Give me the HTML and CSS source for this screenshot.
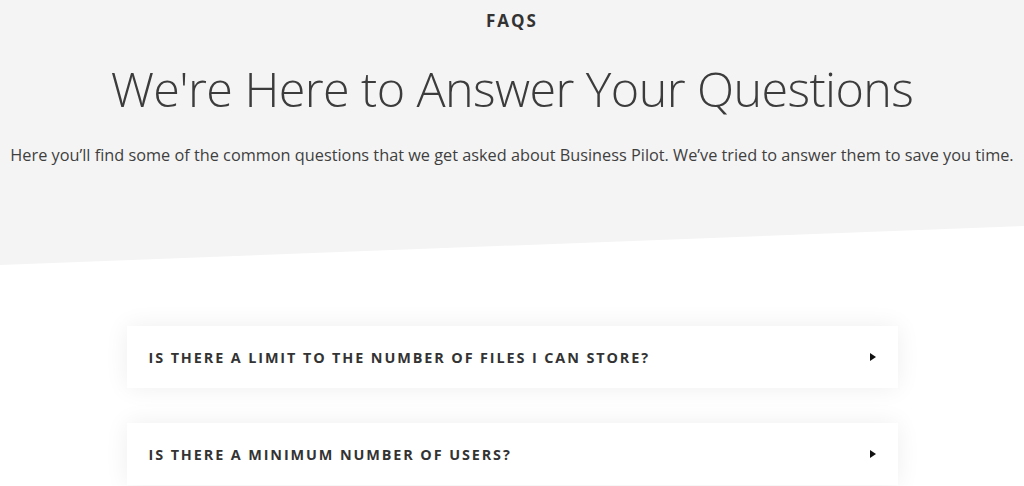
FILE: index.html
```html
<!DOCTYPE html>
<html>
<head>
<meta charset="utf-8">
<link rel="stylesheet" href="styles.css">
</head>
<body>
<section class="hero">
  <div class="eyebrow">FAQS</div>
  <h1 class="title">We're Here to Answer Your Questions</h1>
  <p class="lead">Here you’ll find some of the common questions that we get asked about Business Pilot. We’ve tried to answer them to save you time.</p>
</section>
<section class="faqs">
  <div class="faq">
    <span class="q">IS THERE A LIMIT TO THE NUMBER OF FILES I CAN STORE?</span>
    <span class="arrow"></span>
  </div>
  <div class="faq">
    <span class="q">IS THERE A MINIMUM NUMBER OF USERS?</span>
    <span class="arrow"></span>
  </div>
</section>
</body>
</html>
```
FILE: styles.css
```css
html, body { margin: 0; padding: 0; background: #fff; }
body { font-family: "Open Sans", "Liberation Sans", sans-serif; color: #333; overflow: hidden; height: 486px; }
.hero {
  background: #f4f4f4;
  height: 265px;
  clip-path: polygon(0 0, 100% 0, 100% 226px, 0 265px);
  display: flex; flex-direction: column; align-items: center;
  padding-top: 9px; box-sizing: border-box;
}
.eyebrow { font-size: 17px; font-weight: 700; letter-spacing: 2px; color: #333; line-height: 24px; }
.title { margin: 25px 0 0; font-size: 48.5px; font-weight: 300; color: #3c3c3c; line-height: 60px; letter-spacing: -0.6px; }
.lead { margin: 25px 0 0; font-size: 16.3px; color: #3f3f3f; line-height: 24px; white-space: nowrap; }
.faqs { display: flex; flex-direction: column; align-items: center; gap: 35px; margin-top: 61px; }
.faq {
  width: 771px; height: 62px; background: #fff; box-sizing: border-box;
  display: flex; align-items: center; justify-content: space-between;
  padding: 0 22px;
  box-shadow: 0 0 24px rgba(0,0,0,0.07);
}
.q { font-size: 14.4px; font-weight: 700; letter-spacing: 1.9px; color: #333; }
.arrow { width: 0; height: 0; border-top: 4.5px solid transparent; border-bottom: 4.5px solid transparent; border-left: 6px solid #111; }
```
